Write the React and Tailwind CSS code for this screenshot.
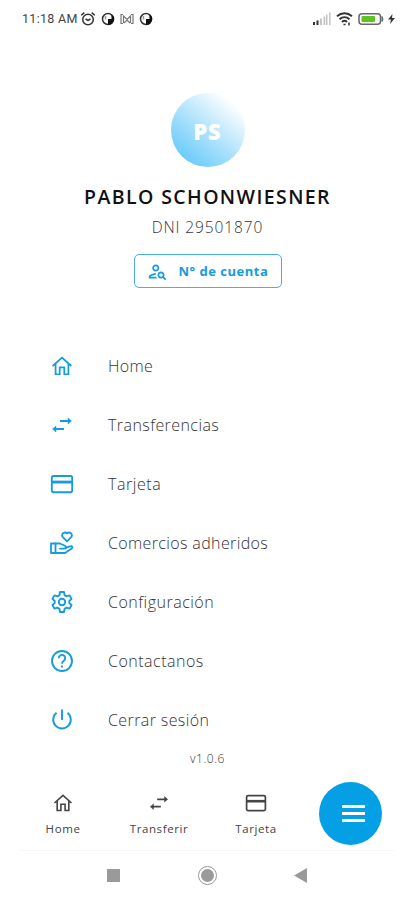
import { MdOutlinePersonSearch } from "react-icons/md";

function HomeIcon({ size }) {
  return (
    <svg width={size} height={size} viewBox="0 0 24 24" fill="none" stroke="currentColor" strokeWidth="1.9">
      <path d="M1.800 12L12 2.800 22.200 12M5 9.500V21h4.500v-7.500h5V21H19V9.500" />
    </svg>
  );
}

function TransferIcon({ size }) {
  return (
    <svg width={size} height={size} viewBox="0 0 24 24" fill="none" stroke="currentColor" strokeWidth="1.8">
      <path d="M10 8h9M14 16H5" />
      <path d="M18 5l3.500 3-3.500 3zM6 13l-3.500 3L6 19z" fill="currentColor" strokeWidth=".5" />
    </svg>
  );
}

function CardIcon({ size }) {
  return (
    <svg width={size} height={size} viewBox="0 0 24 24" fill="none" stroke="currentColor" strokeWidth="1.700">
      <rect x="2.600" y="4.600" width="18.800" height="15" rx="1.500" />
      <path d="M2.600 10.200h18.800" strokeWidth="2.600" />
    </svg>
  );
}

function HandHeart() {
  return (
    <svg width="24" height="24" viewBox="0 0 24 24" fill="none" stroke="currentColor" strokeWidth="1.8" strokeLinejoin="round" strokeLinecap="round">
      <path d="M17 10.300l-4.600-4.700a2.900 2.900 0 0 1 4.600-3.300 2.900 2.900 0 0 1 4.600 3.300z" />
      <path d="M1 12.500h4.500v9.500H1z" />
      <path d="M5.500 12.500H10l5 2.300c1.700 1 1 2.900-.8 2.900H10" />
      <path d="M15.500 16.800l4.500-1.500c2.500-.5 3.200 1.500 1.300 2.500L15 22H5.500" />
    </svg>
  );
}

function Gear() {
  return (
    <svg width="24" height="24" viewBox="0 0 24 24" fill="none" stroke="currentColor" strokeWidth="1.9" strokeLinejoin="round">
      <path d="M10 2h4l.6 3.200 2 1.200 3-1 2 3.500-2.300 2.100v2l2.300 2.100-2 3.500-3-1-2 1.200L14 22h-4l-.6-3.200-2-1.200-3 1-2-3.500L4.700 13v-2L2.400 8.900l2-3.500 3 1 2-1.200z" />
      <circle cx="12" cy="12" r="3.200" />
    </svg>
  );
}

function HelpIcon() {
  return (
    <svg width="24" height="24" viewBox="0 0 24 24" fill="none" stroke="currentColor" strokeWidth="1.9">
      <circle cx="12" cy="12" r="10" />
      <path d="M8.800 9.200a3.200 3.200 0 1 1 5.200 2.400c-1.300 1-2 1.600-2 3.200" />
      <path d="M12 16.500v2" />
    </svg>
  );
}

function PowerIcon() {
  return (
    <svg width="24" height="24" viewBox="0 0 24 24" fill="none" stroke="currentColor" strokeWidth="1.9">
      <path d="M12 1.500v10.500M6.500 4.800a8.800 8.800 0 1 0 11 0" />
    </svg>
  );
}

function AlarmIcon() {
  return (
    <svg width="16" height="16" viewBox="0 0 16 16" fill="none" stroke="#333" strokeWidth="1.5">
      <circle cx="8" cy="8.500" r="5.300" />
      <path d="M1.200 4.300L4.300 1.600M14.800 4.300l-3.100-2.700M5.500 8l2.500 1.500L10.500 8" />
    </svg>
  );
}

function AppBadge() {
  return (
    <svg width="14" height="14" viewBox="0 0 14 14">
      <circle cx="7" cy="7" r="5.500" fill="#fff" stroke="#333" strokeWidth="1.500" />
      <path d="M7 7h3.500V3l1.500.5A6 6 0 0 1 7 13z" fill="#111" />
      <path d="M4.500 4v3.500" stroke="#999" strokeWidth="1.500" />
    </svg>
  );
}

function MailIcon() {
  return (
    <svg width="14" height="12" viewBox="0 0 14 12" fill="none" stroke="#777" strokeWidth="1.200">
      <path d="M3 1.500H1v9h2M11 1.500h2v9h-2M3.500 10V3L7 6.500 10.500 3v7M4 10l3-3 3 3" />
    </svg>
  );
}

function StatusBar() {
  return (
    <div className="flex h-[38px] items-center pl-[22px] pr-[20px]">
      <span className="w-[57px] whitespace-nowrap font-['Roboto',sans-serif] text-[12.5px] tracking-[0.3px] text-[#444]">11:18 AM</span>
      <div className="ml-[1px] flex items-center gap-[5px]">
        <AlarmIcon />
        <AppBadge />
        <MailIcon />
        <AppBadge />
      </div>
      <div className="ml-auto flex items-center">
        <svg width="18" height="14" viewBox="0 0 18 14">
          <path d="M0 10h2v3H0z M3.500 8.500h2V13h-2z" fill="#333" />
          <path d="M7 6.500h2V13H7z M10.500 4.500h1.800V13h-1.800z" fill="#c4c4c4" />
          <path d="M13 2.500h1.500V13H13z M16 .5h1.500V13H16z" fill="#c4c4c4" />
        </svg>
        <svg className="ml-[5px]" width="17" height="14" viewBox="0 0 17 14" fill="none" stroke="#333" strokeWidth="1.900">
          <path d="M1 4.300c4.500-4 10.500-4 15 0M3.500 7.300c3-2.800 7-2.800 10 0M6 10c1.500-1.400 3.500-1.400 5 0" />
          <path d="M7.500 12.500h2M13 10.500v3" strokeWidth="1.500" />
        </svg>
        <svg className="ml-[5px]" width="26" height="14" viewBox="0 0 26 14">
          <rect x="1" y="1.700" width="21.500" height="10.600" rx="3" fill="#fff" stroke="#666" strokeWidth="1.500" />
          <path d="M24 4.500q2 2.500 0 5z" fill="#666" stroke="#666" />
          <rect x="3.500" y="4" width="13.500" height="6" rx="1" fill="#5ec221" />
        </svg>
        <svg className="ml-[4px]" width="7" height="12" viewBox="0 0 7 12">
          <path d="M4.500 1L0 6.500h3L2 11l5-6H4z" fill="#333" />
        </svg>
      </div>
    </div>
  );
}

function MenuItem({ icon, label, spacing }) {
  return (
    <div className="flex h-[59.2px] items-center">
      <div className="ml-[46px] flex w-[31px] justify-center text-[#159be0]">{icon}</div>
      <span className={`ml-[31px] whitespace-nowrap text-[16px] font-light text-[#333] ${spacing}`}>{label}</span>
    </div>
  );
}

function Tab({ icon, label, className }) {
  return (
    <div className={`flex w-[80px] flex-col items-center text-[#444] ${className}`}>
      <div className="flex h-[24px] items-center">{icon}</div>
      <span className="mt-[6px] whitespace-nowrap text-[11.5px] leading-[16px] tracking-[0.6px]">{label}</span>
    </div>
  );
}

export default function App() {
  return (
    <div className="flex h-[900px] w-[415px] flex-col overflow-hidden bg-white font-['Open_Sans','Noto_Sans',sans-serif]">
      <StatusBar />

      <div className="flex h-[298px] flex-col items-center pt-[55px]">
        <div className="flex size-[74px] items-center justify-center rounded-full bg-[linear-gradient(40deg,#5fc8fa_8%,#a9e0fc_45%,#ffffff_86%)]">
          <span className="pt-[2px] text-[22px] font-extrabold tracking-[1px] text-white">PS</span>
        </div>
        <h1 className="mt-[16px] whitespace-nowrap text-[19.5px] font-semibold leading-[28px] tracking-[1.4px] text-[#111]">PABLO SCHONWIESNER</h1>
        <p className="mt-[4px] whitespace-nowrap text-[15.5px] font-light leading-[24px] tracking-[0.9px] text-[#333]">DNI 29501870</p>
        <button className="mt-[15px] flex h-[34px] w-[148px] items-center rounded-[5px] border border-[#4aaee2] pl-[12px] text-[#159be0]">
          <MdOutlinePersonSearch size={21} />
          <span className="ml-[11px] mt-[2px] whitespace-nowrap text-[13px] font-bold tracking-[0.5px]">N° de cuenta</span>
        </button>
      </div>

      <nav className="flex h-[414px] flex-col">
        <MenuItem icon={<HomeIcon size={22} />} label="Home" spacing="tracking-[0.3px]" />
        <MenuItem icon={<TransferIcon size={24} />} label="Transferencias" spacing="tracking-[0.43px]" />
        <MenuItem icon={<CardIcon size={26} />} label="Tarjeta" spacing="tracking-[0.55px]" />
        <MenuItem icon={<HandHeart />} label="Comercios adheridos" spacing="tracking-[0.37px]" />
        <MenuItem icon={<Gear />} label="Configuración" spacing="tracking-[0.5px]" />
        <MenuItem icon={<HelpIcon />} label="Contactanos" spacing="tracking-[0.5px]" />
        <MenuItem icon={<PowerIcon />} label="Cerrar sesión" spacing="tracking-[0.4px]" />
      </nav>
      <p className="text-center text-[12px] font-light leading-[18px] tracking-[0.5px] text-[#333]">v1.0.6</p>

      <div className="flex h-[82px] pt-[14px]">
        <div className="flex pt-[9px]">
          <Tab className="ml-[23px]" icon={<HomeIcon size={20} />} label="Home" />
          <Tab className="ml-[16px]" icon={<TransferIcon size={22} />} label="Transferir" />
          <Tab className="ml-[17px]" icon={<CardIcon size={24} />} label="Tarjeta" />
        </div>
        <button className="ml-[23px] flex size-[63px] flex-col items-center justify-center gap-[4px] rounded-full bg-[#049fe5] pl-[5px]">
          <span className="h-[3px] w-[23px] bg-white" />
          <span className="h-[3px] w-[23px] bg-white" />
          <span className="h-[3px] w-[23px] bg-white" />
        </button>
      </div>

      <div className="mx-[20px] flex h-[50px] items-center border-t border-[#f7f7f7]">
        <div className="ml-[87px] size-[13px] bg-[#9a9a9a]" />
        <div className="ml-[78px] flex size-[19px] items-center justify-center rounded-full border border-[#999]">
          <div className="size-[13px] rounded-full bg-[#9a9a9a]" />
        </div>
        <svg className="ml-[77px]" width="13" height="15" viewBox="0 0 13 15">
          <path d="M13 0v15L0 7.500z" fill="#999" />
        </svg>
      </div>
    </div>
  );
}
